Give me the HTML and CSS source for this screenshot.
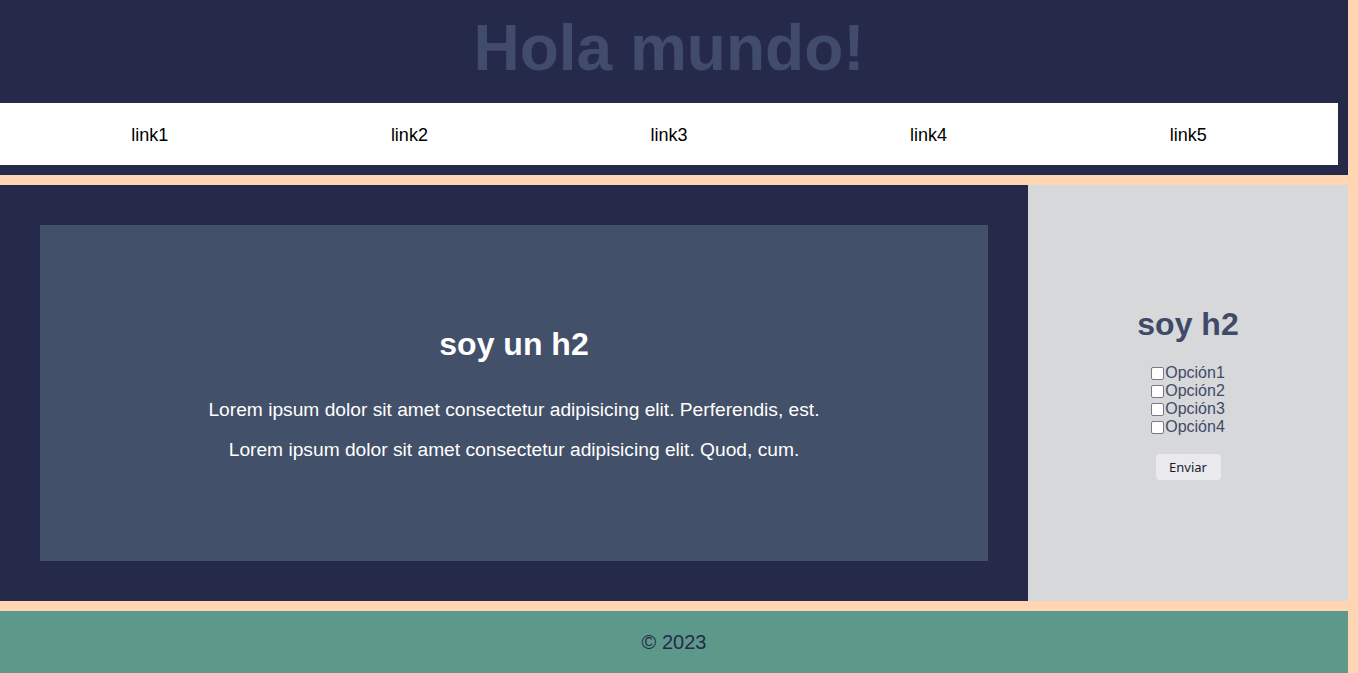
FILE: index.html
```html
<!DOCTYPE html>
<html lang="es">
<head>
<meta charset="utf-8">
<title>Hola mundo</title>
<link rel="stylesheet" href="styles.css">
</head>
<body>
<div class="page">
  <header class="header">
    <h1 class="title">Hola mundo!</h1>
    <nav class="nav">
      <a class="nav-link" href="#">link1</a>
      <a class="nav-link" href="#">link2</a>
      <a class="nav-link" href="#">link3</a>
      <a class="nav-link" href="#">link4</a>
      <a class="nav-link" href="#">link5</a>
    </nav>
  </header>
  <main class="main">
    <section class="content">
      <div class="card">
        <h2 class="card-title">soy un h2</h2>
        <p class="card-text">Lorem ipsum dolor sit amet consectetur adipisicing elit. Perferendis, est.</p>
        <p class="card-text">Lorem ipsum dolor sit amet consectetur adipisicing elit. Quod, cum.</p>
      </div>
    </section>
    <aside class="aside">
      <h2 class="aside-title">soy h2</h2>
      <form class="form">
        <div class="options">
          <label class="option"><input class="check" type="checkbox">Opción1</label>
          <label class="option"><input class="check" type="checkbox">Opción2</label>
          <label class="option"><input class="check" type="checkbox">Opción3</label>
          <label class="option"><input class="check" type="checkbox">Opción4</label>
        </div>
        <button class="btn" type="button">Enviar</button>
      </form>
    </aside>
  </main>
  <footer class="footer">© 2023</footer>
</div>
</body>
</html>
```
FILE: styles.css
```css
* { box-sizing: border-box; }
html, body { margin: 0; padding: 0; }
body {
  background: #ffd5b3;
  font-family: "Liberation Sans", Arial, sans-serif;
  overflow: hidden;
}
.page {
  display: grid;
  grid-template-rows: 175px 416px 62px;
  gap: 10px;
  width: 1348px;
}
.header {
  background: #262a4a;
  padding: 0 10px 10px 0;
  display: flex;
  flex-direction: column;
}
.title {
  margin: 0;
  padding-top: 12px;
  height: 103px;
  font-size: 64px;
  line-height: 73px;
  font-weight: 700;
  color: #414b6b;
  text-align: center;
}
.nav {
  background: #fff;
  height: 62px;
  padding: 0 20px;
  display: flex;
  align-items: center;
}
.nav-link {
  flex: 1;
  text-align: center;
  font-size: 18px;
  line-height: 22px;
  padding-top: 2px;
  color: #000;
  text-decoration: none;
}
.main {
  display: grid;
  grid-template-columns: 1028px 320px;
}
.content {
  background: #262a4a;
  padding: 40px;
}
.card {
  height: 100%;
  padding-top: 10px;
  background: #435069;
  display: flex;
  flex-direction: column;
  justify-content: center;
  align-items: center;
  color: #fff;
}
.card-title {
  margin: 0 0 27px;
  font-size: 32px;
  line-height: 37px;
  font-weight: 700;
}
.card-text {
  margin: 9px 0;
  font-size: 19.2px;
  line-height: 22px;
}
.aside {
  background: #d7d8da;
  display: flex;
  flex-direction: column;
  justify-content: center;
  align-items: center;
  color: #3f4a69;
}
.aside-title {
  margin: 0 0 21px;
  font-size: 32px;
  line-height: 37px;
  font-weight: 700;
}
.form {
  display: flex;
  flex-direction: column;
  align-items: center;
}
.options {
  display: flex;
  flex-direction: column;
}
.option {
  display: flex;
  align-items: center;
  font-size: 16px;
  line-height: 18px;
}
.check {
  -webkit-appearance: none;
  appearance: none;
  margin: 0 1px 0 0;
  width: 13px;
  height: 13px;
  border: 1.5px solid #7a7a80;
  border-radius: 2px;
  background: #fff;
}
.btn {
  margin-top: 18px;
  border: none;
  border-radius: 4px;
  background: #e9e9ee;
  color: #1b1b2b;
  font-family: "Noto Sans", sans-serif;
  font-size: 13px;
  height: 26px;
  width: 65px;
  padding: 0;
}
.footer {
  background: #5c998a;
  color: #262a4a;
  display: flex;
  justify-content: center;
  align-items: center;
  font-size: 20px;
}
```
